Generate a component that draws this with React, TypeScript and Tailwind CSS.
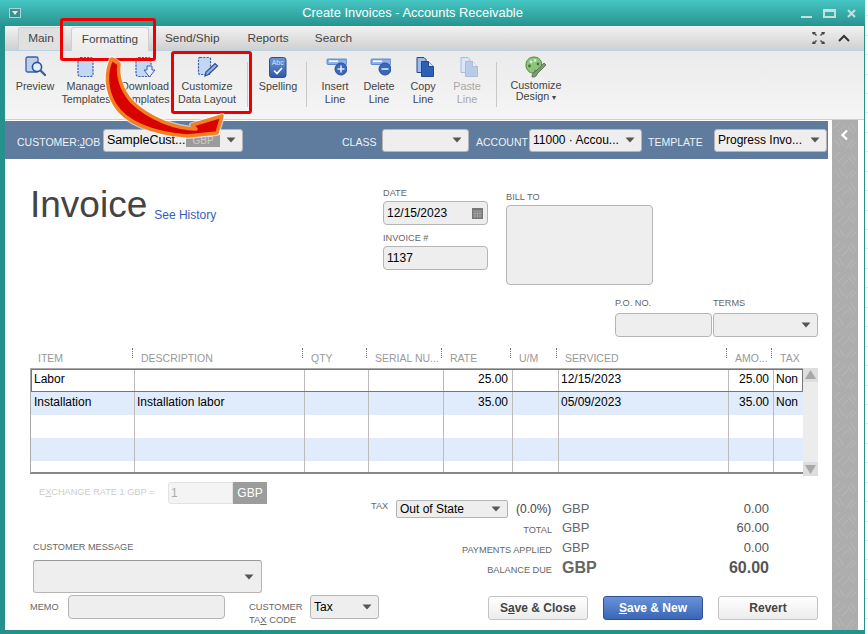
import React from "react";

function Caret({ className = "" }: { className?: string }) {
  return (
    <svg width="10" height="6" viewBox="0 0 10 6" className={className}>
      <path d="M0.5 0.5h9L5 5.5z" fill="#555" />
    </svg>
  );
}

function Select({
  className,
  text,
  children,
}: {
  className: string;
  text?: string;
  children?: React.ReactNode;
}) {
  return (
    <div
      className={`flex items-center justify-between bg-[#eeeeee] border border-[#b5b5b5] rounded-[3px] pl-[3px] pr-[6px] text-[12px] text-black shrink-0 ${className}`}
    >
      <span className="truncate">{text}</span>
      {children}
      <Caret className="shrink-0" />
    </div>
  );
}

function Label({ children, className = "" }: { children: React.ReactNode; className?: string }) {
  return <div className={`text-[9.2px] leading-[11px] text-[#666] whitespace-nowrap ${className}`}>{children}</div>;
}

function PreviewIcon() {
  return (
    <svg width="22" height="22" viewBox="0 0 22 22">
      <rect x="2" y="1" width="12" height="15" rx="1.5" fill="#bcd0ee" stroke="#3a5fa5" strokeWidth="1.3" />
      <circle cx="13" cy="11" r="4.6" fill="#e3ecf9" stroke="#2c4f96" strokeWidth="1.6" />
      <path d="M16.5 14.5l4.5 4.5" stroke="#3a5fa5" strokeWidth="2.4" strokeLinecap="round" />
    </svg>
  );
}

function PageIcon({ download }: { download?: boolean }) {
  return (
    <svg width="22" height="22" viewBox="0 0 22 22">
      <rect x={download ? 2 : 3} y="1.5" width="15" height="19" rx="2.5" fill="#c3d7f4" stroke="#3a5fa5" strokeWidth="1.2" strokeDasharray="2.2 1.1" />
      {download && <path d="M13 10h5v4h3l-5.5 7L10 14h3z" fill="#e2ebf9" stroke="#3a5fa5" />}
    </svg>
  );
}

function LayoutIcon() {
  return (
    <svg width="24" height="22" viewBox="0 0 24 22">
      <rect x="3.5" y="1.5" width="12" height="17" rx="1.5" fill="#c3d7f4" stroke="#3a5fa5" strokeWidth="1.2" strokeDasharray="2.2 1.1" />
      <path d="M10 20l1-4 9-8.5 2.5 2.5-9 8.500z" fill="#8fb0e4" stroke="#2c4f96" strokeWidth="1.2" />
    </svg>
  );
}

function SpellIcon() {
  return (
    <svg width="18" height="21" viewBox="0 0 18 21">
      <defs>
        <linearGradient id="spell" x1="0" y1="0" x2="0" y2="1">
          <stop offset="0" stopColor="#6f95d2" />
          <stop offset="1" stopColor="#2f58ab" />
        </linearGradient>
      </defs>
      <rect x="0.5" y="0.5" width="16.5" height="20" rx="2.5" fill="url(#spell)" stroke="#2c4f96" />
      <text x="8.7" y="8" textAnchor="middle" fontSize="7" fill="#dbe6f7" fontFamily="Liberation Sans">Abc</text>
      <path d="M5 13.5l3 3 5-5.5" fill="none" stroke="#fff" strokeWidth="1.7" />
    </svg>
  );
}

function LineIcon({ plus }: { plus?: boolean }) {
  return (
    <svg width="24" height="22" viewBox="0 0 24 22">
      <rect x="4" y="3" width="20" height="5.5" rx="1" fill="#8db0e6" stroke="#4a78c0" strokeWidth="0.8" />
      <rect x="6" y="4.5" width="9" height="1.5" fill="#fff" />
      <circle cx="18" cy="13" r="6" fill="#3a68bd" stroke="#2c4f96" />
      <path d={plus ? "M14.5 13h7M18 9.5v7" : "M14.5 13h7"} stroke="#dfe9f8" strokeWidth="1.6" />
    </svg>
  );
}

function CopyIcon({ muted }: { muted?: boolean }) {
  const fill = muted ? "#b9cbe6" : "#2f5fb5";
  const stroke = muted ? "#a9bcd8" : "#23488f";
  return (
    <svg width="22" height="22" viewBox="0 0 22 22">
      <path d="M5 1.5h7l2 2v13H5z" fill={muted ? "#dce6f4" : "#9dbcea"} stroke={stroke} />
      <path d="M9.5 5.5h7l5 5v10h-12z" fill={fill} stroke={stroke} />
      <path d="M16.5 5.5v5h5" fill={muted ? "#eef3fa" : "#dce8fa"} stroke={stroke} />
    </svg>
  );
}

function PaletteIcon() {
  return (
    <svg width="22" height="22" viewBox="0 0 22 22">
      <path d="M9 1C4 1 1 4.5 1 9s3 8 7 8c2 0 2-1.5 1.5-3 2 1 5 .5 6-1.5C18 9.5 17 1 9 1z" fill="#8fc47c" stroke="#4d8a3e" />
      <circle cx="6" cy="6" r="1.4" fill="#d9ecd0" />
      <circle cx="10" cy="4.5" r="1.4" fill="#d9ecd0" />
      <circle cx="4.5" cy="10" r="1.4" fill="#3f7a33" />
      <circle cx="13" cy="8" r="1.4" fill="#3f7a33" />
      <path d="M7 21c0-3 1-4.500 3-5l9-9 2 2-9 9c0 2-2 3.500-5 3z" fill="#7f9a76" stroke="#4f6a48" strokeWidth="0.8" />
    </svg>
  );
}

function RibbonItem({
  lines,
  icon,
  className,
  muted,
}: {
  lines: string[];
  icon: React.ReactNode;
  className: string;
  muted?: boolean;
}) {
  return (
    <div className={`flex flex-col items-center shrink-0 ${className}`}>
      <div className="h-[24px] flex items-center justify-center">{icon}</div>
      <div className={`text-center text-[10.8px] leading-[13px] mt-px whitespace-nowrap ${muted ? "text-[#a8a8a8]" : "text-[#444]"}`}>
        {lines.map((l) => (
          <div key={l}>{l}</div>
        ))}
      </div>
    </div>
  );
}

function Sep({ className }: { className: string }) {
  return <div className={`w-px h-[45px] bg-[#c8c8c8] mt-[7px] shrink-0 ${className}`} />;
}

const columns = [
  { label: "ITEM", w: "w-[104px]" },
  { label: "DESCRIPTION", w: "w-[170px]" },
  { label: "QTY", w: "w-[64px]" },
  { label: "SERIAL NU...", w: "w-[75px]" },
  { label: "RATE", w: "w-[69px]" },
  { label: "U/M", w: "w-[46px]" },
  { label: "SERVICED", w: "w-[170px]" },
  { label: "AMO...", w: "w-[45px]" },
  { label: "TAX", w: "w-[30px]" },
];

const rows = [
  ["Labor", "", "", "", "25.00", "", "12/15/2023", "25.00", "Non"],
  ["Installation", "Installation labor", "", "", "35.00", "", "05/09/2023", "35.00", "Non"],
  ["", "", "", "", "", "", "", "", ""],
  ["", "", "", "", "", "", "", "", ""],
  ["", "", "", "", "", "", "", "", ""],
];

function Row({ cells, index }: { cells: string[]; index: number }) {
  const h = index === 4 ? "h-[11px]" : "h-[23px]";
  const bg = index % 2 === 1 ? "bg-[#e0ecfc]" : "bg-white";
  return (
    <div className={`flex text-[12px] text-black ${h} ${bg}`}>
      {cells.map((c, i) => (
        <div
          key={i}
          className={`${columns[i].w} shrink-0 leading-[20px] overflow-hidden border-[#bcbcbc] ${i < 8 ? "border-r" : ""} ${i === 4 || i === 7 ? "text-right pr-[4px]" : i === 1 || i === 6 || i === 8 ? "pl-[2px]" : "pl-[3px]"}`}
        >
          {c}
        </div>
      ))}
    </div>
  );
}

function Total({ label, cur, amount, bold }: { label: string; cur: string; amount: string; bold?: boolean }) {
  return (
    <div className="flex items-center h-[20px]">
      <div className="w-[181px] text-right">
        <Label className="inline-block">{label}</Label>
      </div>
      <div className={`ml-[10px] w-[100px] text-[#666] ${bold ? "font-bold text-[16px]" : "text-[13px]"}`}>{cur}</div>
      <div className={`w-[107px] text-right text-[#555] ${bold ? "font-bold text-[16px]" : "text-[13px]"}`}>{amount}</div>
    </div>
  );
}

const arrowPath =
  "M112 59 C105 72 106 90 115 105 C125 121 149 133 187 136 L217 133 L222 116 L192 125 L196 129 C178 129 150 120 131 101 C122 90 117 78 119 64 Z";

export default function App() {
  return (
    <div
      className="relative w-[868px] h-[634px] overflow-hidden bg-white flex"
      style={{ fontFamily: '"Liberation Sans", Arial, sans-serif' }}
    >
      <div className="w-[865px] h-full flex flex-col bg-[#26908c] pb-[4px]">
        {/* title bar */}
        <div className="h-[26px] shrink-0 flex items-center justify-between pl-[9px] pr-[9px] bg-gradient-to-b from-[#46c6c4] to-[#279490]">
          <div className="w-[12px] h-[10px] bg-[#3f8f8d] border border-[#a9d6d5] flex items-center justify-center">
            <svg width="6" height="4" viewBox="0 0 6 4"><path d="M0 0h6L3 4z" fill="#d5eeee" /></svg>
          </div>
          <div className="text-[12.9px] text-white ml-[3px]">Create Invoices - Accounts Receivable</div>
          <div className="flex items-center gap-[11px]">
            <div className="w-[11px] h-[2px] bg-[#c6dede] mt-[8px]" />
            <div className="w-[13px] h-[9px] border-[2px] border-[#c6dede] border-t-[3px]" />
            <svg width="9" height="9" viewBox="0 0 9 9"><path d="M1 1l7 7M8 1L1 8" stroke="#c6dede" strokeWidth="2.2" /></svg>
          </div>
        </div>

        <div className="flex-1 flex flex-col ml-[5px] mr-px min-h-0 bg-white">
          {/* tab strip */}
          <div className="h-[25px] shrink-0 flex items-end pl-[13px] bg-gradient-to-b from-[#f2f2f2] to-[#d0d0d0] border-b border-[#b8d2e4] text-[11.8px] text-[#444]">
            <div className="w-[44px] h-[23px] flex items-center justify-center bg-[#e0e0e0] border border-b-0 border-[#cfcfcf] rounded-t-[3px] pl-[2px]">Main</div>
            <div className="w-[78px] ml-[9px] h-[24px] flex items-center justify-center bg-gradient-to-b from-[#f4f4f4] to-[#ececec] border border-b-0 border-[#cfcfcf] rounded-t-[3px] mb-[-1px]">Formatting</div>
            <div className="h-[23px] flex items-center ml-[16px]">
              <span>Send/Ship</span>
              <span className="ml-[28px]">Reports</span>
              <span className="ml-[26px]">Search</span>
            </div>
            <div className="ml-auto h-[23px] mb-px flex items-center gap-[13px] pr-[14px]">
              <svg width="13" height="12" viewBox="0 0 13 12">
                <path d="M0 0h4L3 1l2 2-1 1-2-2-1 1zM13 0H9l1 1-2 2 1 1 2-2 1 1zM0 12h4l-1-1 2-2-1-1-2 2-1-1zM13 12H9l1-1-2-2 1-1 2 2 1-1z" fill="#444" />
              </svg>
              <svg width="12" height="8" viewBox="0 0 12 8"><path d="M1 7l5-5 5 5" fill="none" stroke="#333" strokeWidth="2" /></svg>
            </div>
          </div>

          {/* ribbon */}
          <div className="h-[69px] shrink-0 flex items-start pt-[4px] bg-gradient-to-b from-[#ebebeb] to-[#f5f5f5] border-b border-[#cfcfcf]">
            <RibbonItem className="w-[44px] ml-[8px]" lines={["Preview"]} icon={<PreviewIcon />} />
            <RibbonItem className="w-[54px] ml-[2px]" lines={["Manage", "Templates"]} icon={<PageIcon />} />
            <RibbonItem className="w-[54px] ml-[5px]" lines={["Download", "Templates"]} icon={<PageIcon download />} />
            <RibbonItem className="w-[60px] ml-[5px]" lines={["Customize", "Data Layout"]} icon={<LayoutIcon />} />
            <Sep className="ml-[10px]" />
            <RibbonItem className="w-[44px] ml-[8px]" lines={["Spelling"]} icon={<SpellIcon />} />
            <Sep className="ml-[6px]" />
            <RibbonItem className="w-[40px] ml-[8px]" lines={["Insert", "Line"]} icon={<LineIcon plus />} />
            <RibbonItem className="w-[40px] ml-[4px]" lines={["Delete", "Line"]} icon={<LineIcon />} />
            <RibbonItem className="w-[40px] ml-[4px]" lines={["Copy", "Line"]} icon={<CopyIcon />} />
            <RibbonItem className="w-[40px] ml-[4px]" lines={["Paste", "Line"]} icon={<CopyIcon muted />} muted />
            <Sep className="ml-[9px]" />
            <div className="flex flex-col items-center w-[64px] ml-[7px] shrink-0">
              <div className="h-[24px] flex items-center"><PaletteIcon /></div>
              <div className="text-center text-[10.8px] leading-[11px] mt-px text-[#444]">
                Customize
                <br />
                Design <span className="text-[8px]">▾</span>
              </div>
            </div>
          </div>

          {/* form + side panel */}
          <div className="flex-1 flex min-h-0">
            <div className="w-[823px] shrink-0 flex flex-col mt-px">
              {/* customer header */}
              <div className="h-[38px] shrink-0 bg-[#5f7b9d] flex items-center pl-[12px] text-[10.5px] text-[#eef2f6]">
                <span className="w-[86px] mt-[5px]">
                  CUSTOMER:<span className="underline">J</span>OB
                </span>
                <Select className="w-[140px] h-[23px] !text-[12.5px] relative" text="SampleCust...">
                  <span className="absolute left-[82px] top-[5px] w-[34px] h-[12px] bg-[#9b9b9b] text-[#ccc] text-[10px] leading-[12px] text-center">GBP</span>
                </Select>
                <span className="ml-[99px] w-[40px] mt-[5px]">CLASS</span>
                <Select className="w-[87px] h-[23px]" />
                <span className="ml-[7px] w-[53px] mt-[5px]">ACCOUNT</span>
                <Select className="w-[113px] h-[23px]" text="11000 · Accou..." />
                <span className="ml-[6px] w-[66px] mt-[5px]">TEMPLATE</span>
                <Select className="w-[113px] h-[23px]" text="Progress Invo..." />
              </div>

              {/* invoice head */}
              <div className="flex bg-white pt-[26px] h-[130px] shrink-0">
                <div className="w-[378px] pl-[25px] flex items-baseline shrink-0">
                  <span className="text-[37px] leading-[40px] text-[#444]">Invoice</span>
                  <span className="ml-[7px] text-[12px] text-[#3560b5] translate-y-[2px]">See History</span>
                </div>
                <div className="w-[105px] shrink-0">
                  <Label className="mt-[3px]">DATE</Label>
                  <div className="mt-[2px] h-[24px] rounded-[4px] border border-[#b5b5b5] bg-[#eeeeee] pl-[3px] pr-[4px] flex items-center justify-between text-[12px] text-black">
                    12/15/2023
                    <svg width="11" height="11" viewBox="0 0 11 11">
                      <rect width="11" height="11" fill="#777" />
                      <path d="M1 3h9M1 5.5h9M1 8h9M3 3v7M5.5 3v7M8 3v7" stroke="#bbb" strokeWidth="0.6" />
                    </svg>
                  </div>
                  <Label className="mt-[8px]">INVOICE #</Label>
                  <div className="mt-[2px] h-[24px] rounded-[4px] border border-[#b5b5b5] bg-[#eeeeee] pl-[3px] flex items-center text-[12px] text-black">1137</div>
                </div>
                <div className="w-[147px] ml-[18px] shrink-0 pt-[7px]">
                  <Label>BILL TO</Label>
                  <div className="mt-[2px] h-[80px] rounded-[4px] border border-[#b5b5b5] bg-[#eeeeee]" />
                </div>
              </div>

              {/* po row */}
              <div className="flex pl-[610px] mt-[9px] shrink-0">
                <div className="w-[97px]">
                  <Label>P.O. NO.</Label>
                  <div className="mt-[4px] h-[24px] rounded-[4px] border border-[#b5b5b5] bg-[#eeeeee]" />
                </div>
                <div className="w-[105px] ml-px">
                  <Label>TERMS</Label>
                  <Select className="mt-[4px] h-[24px]" />
                </div>
              </div>

              {/* line items */}
              <div className="flex ml-[25px] mt-[14px] h-[16px] items-center shrink-0">
                {columns.map((c, i) => (
                  <div
                    key={c.label}
                    className={`${c.w} shrink-0 flex justify-between text-[10.5px] text-[#999] whitespace-nowrap ${i === 0 ? "pl-[8px]" : "pl-[7px]"}`}
                  >
                    <span>{c.label}</span>
                    {i < 8 && <span className="w-px h-[10px] mt-[-3px] mr-px border-r border-dotted border-[#777]" />}
                  </div>
                ))}
              </div>
              <div className="flex ml-[25px] mt-px w-[788px] shrink-0">
                <div className="relative w-[773px] border-t border-b-2 border-l border-t-[#aaa] border-b-[#888] border-l-[#aaa]">
                  {rows.map((r, i) => (
                    <Row key={i} cells={r} index={i} />
                  ))}
                  <div className="absolute left-0 right-0 top-0 h-[23px] border border-[#777]" />
                </div>
                <div className="w-[15px] flex flex-col items-center justify-between bg-[#ececec]">
                  <div className="h-[14px] w-full bg-[#dedede] flex justify-center pt-[2px]">
                    <svg width="11" height="9" viewBox="0 0 11 9"><path d="M5.5 0L11 9H0z" fill="#a8a8a8" /></svg>
                  </div>
                  <div className="h-[14px] w-full bg-[#dedede] flex justify-center pt-[3px] mb-[-2px]">
                    <svg width="11" height="9" viewBox="0 0 11 9"><path d="M5.5 9L11 0H0z" fill="#a8a8a8" /></svg>
                  </div>
                </div>
              </div>

              {/* bottom part */}
              <div className="flex mt-[8px] flex-1 min-h-0">
                <div className="w-[366px] shrink-0 pl-[25px]">
                  <div className="flex items-center h-[22px] ml-[9px]">
                    <span className="w-[129px] shrink-0 text-[9.2px] text-[#ccc]">
                      E<span className="underline">X</span>CHANGE RATE 1 GBP =
                    </span>
                    <div className="w-[65px] h-[22px] shrink-0 bg-[#f4f4f4] border border-[#e2e2e2] rounded-l-[3px] pl-[2px] text-[12px] leading-[20px] text-[#aaa]">1</div>
                    <div className="w-[34px] h-[22px] shrink-0 bg-[#9c9c9c] text-white text-[12px] leading-[22px] text-center">GBP</div>
                  </div>
                  <Label className="ml-[3px] mt-[38px]">CUSTOMER MESSAGE</Label>
                  <div className="ml-[3px] mt-[7px] w-[229px] h-[33px] flex items-center justify-end pr-[7px] bg-[#eeeeee] rounded-[3px] border border-[#b5b5b5] border-t-[#999]">
                    <Caret />
                  </div>
                  <div className="flex items-start mt-[2px]">
                    <Label className="w-[38px] shrink-0 mt-[7px]">MEMO</Label>
                    <div className="w-[157px] h-[24px] shrink-0 bg-[#eeeeee] rounded-[4px] border border-[#b5b5b5]" />
                    <div className="ml-[24px] w-[61px] shrink-0 mt-[5px] text-[9.4px] leading-[13px] text-[#666]">
                      CUSTOMER
                      <br />
                      TA<span className="underline">X</span> CODE
                    </div>
                    <Select className="w-[69px] h-[24px]" text="Tax" />
                  </div>
                </div>

                <div className="w-[447px] shrink-0 pt-[18px]">
                  <div className="flex items-center h-[18px]">
                    <Label className="w-[25px] mt-[-5px]">TAX</Label>
                    <Select className="w-[112px] h-[18px] !rounded-[2px]" text="Out of State" />
                    <span className="ml-[8px] w-[36px] text-[12px] text-[#444]">(0.0%)</span>
                    <span className="ml-[10px] w-[100px] text-[13px] text-[#666]">GBP</span>
                    <span className="w-[107px] text-right text-[13px] text-[#555]">0.00</span>
                  </div>
                  <Total label="TOTAL" cur="GBP" amount="60.00" />
                  <Total label="PAYMENTS APPLIED" cur="GBP" amount="0.00" />
                  <Total label="BALANCE DUE" cur="GBP" amount="60.00" bold />
                  <div className="flex mt-[18px] ml-[117px] gap-[15px] text-[12px] font-bold">
                    <div className="w-[100px] h-[24px] flex items-center justify-center rounded-[3px] border border-[#c4c4c4] bg-gradient-to-b from-white to-[#ececec] text-[#444]">
                      <span>S<span className="underline">a</span>ve &amp; Close</span>
                    </div>
                    <div className="w-[100px] h-[24px] flex items-center justify-center rounded-[3px] border border-[#2c5296] bg-gradient-to-b from-[#6a92d8] to-[#3b66b8] text-white">
                      <span><span className="underline">S</span>ave &amp; New</span>
                    </div>
                    <div className="w-[100px] h-[24px] flex items-center justify-center rounded-[3px] border border-[#c4c4c4] bg-gradient-to-b from-white to-[#ececec] text-[#444]">
                      Revert
                    </div>
                  </div>
                </div>
              </div>
            </div>

            {/* side panel */}
            <div className="w-[26px] ml-[4px] shrink-0 bg-[#adadad] relative overflow-hidden">
              <svg width="26" height="512" className="absolute inset-0">
                <defs>
                  <pattern id="hatch" width="26" height="30" patternUnits="userSpaceOnUse">
                    <path d="M2 8l6-6M6 12l7-7M10 16l7-7M16 6l6 8M19 3l5 8M3 20l5 7M7 18l5 8M14 28l7-8M18 28l6-6" stroke="#b8b8b8" strokeWidth="1" />
                  </pattern>
                </defs>
                <rect width="26" height="512" fill="url(#hatch)" />
              </svg>
              <svg width="9" height="12" viewBox="0 0 9 12" className="absolute left-[8px] top-[9px]">
                <path d="M7 1.5L2.5 6 7 10.5" fill="none" stroke="#fff" strokeWidth="2.4" />
              </svg>
            </div>
          </div>
        </div>
      </div>

      {/* desktop strip to the right of the window */}
      <div className="flex-1 flex flex-col justify-around py-[6px]">
        {Array.from({ length: 32 }).map((_, i) => (
          <div key={i} className="h-px bg-[#dfe8e8]" />
        ))}
      </div>

      {/* tutorial annotations */}
      <div className="absolute left-[60px] top-[18px] w-[96px] h-[43px] border-[3px] border-[#ee0000] rounded-[3px]" />
      <div className="absolute left-[171px] top-[51px] w-[81px] h-[63px] border-[3px] border-[#ee0000] rounded-[3px]" />
      <svg width="868" height="634" className="absolute inset-0 pointer-events-none">
        <path d={arrowPath} fill="none" stroke="#ffffff" strokeOpacity="0.6" strokeWidth="6" strokeLinejoin="round" />
        <path d={arrowPath} fill="#d90000" stroke="#f47f22" strokeWidth="3.5" strokeLinejoin="round" />
      </svg>
    </div>
  );
}
